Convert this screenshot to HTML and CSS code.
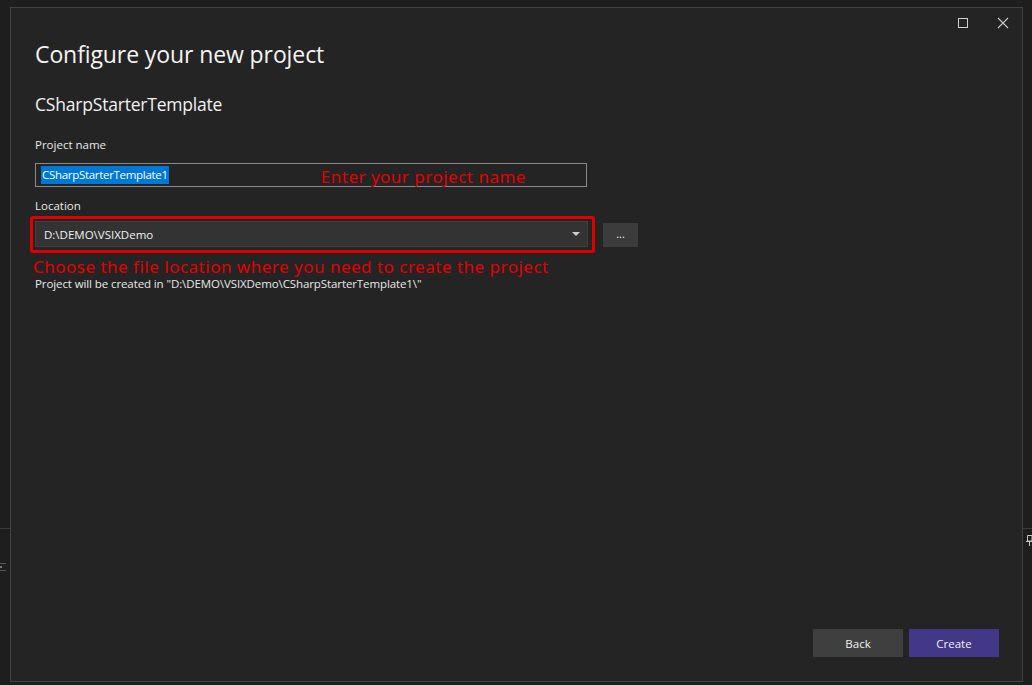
FILE: index.html
```html
<!DOCTYPE html>
<html>
<head>
<meta charset="utf-8">
<link rel="stylesheet" href="styles.css">
</head>
<body>
<div class="screen">
  <div class="side side-left">
    <div class="side-line"></div>
    <div class="side-marks"><span></span><span class="short"></span><span></span></div>
  </div>
  <div class="dialog">
    <div class="titlebar">
      <svg class="ctl" width="12" height="12" viewBox="0 0 12 12"><rect x="1.5" y="1.5" width="9" height="9" fill="none" stroke="#d0d0d0" stroke-width="1"/></svg>
      <svg class="ctl" width="12" height="12" viewBox="0 0 12 12"><path d="M1 1 L11 11 M11 1 L1 11" stroke="#c8c8c8" stroke-width="1.1"/></svg>
    </div>
    <div class="content">
      <h1 class="title">Configure your new project</h1>
      <h2 class="subtitle">CSharpStarterTemplate</h2>
      <div class="label">Project name</div>
      <div class="input">
        <span class="selected">CSharpStarterTemplate1</span>
        <span class="note note-name">Enter your project name</span>
      </div>
      <div class="label label-loc">Location</div>
      <div class="loc-row">
        <div class="highlight">
          <div class="combo">
            <span>D:\DEMO\VSIXDemo</span>
            <svg width="8" height="5" viewBox="0 0 8 5"><path d="M0 0 L8 0 L4 4 Z" fill="#d0d0d0"/></svg>
          </div>
        </div>
        <div class="browse">...</div>
      </div>
      <div class="note note-loc">Choose the file location where you need to create the project</div>
      <div class="info">Project will be created in "D:\DEMO\VSIXDemo\CSharpStarterTemplate1\"</div>
    </div>
    <div class="footer">
      <button class="btn btn-back">Back</button>
      <button class="btn btn-create">Create</button>
    </div>
  </div>
  <div class="side side-right">
    <div class="side-line"></div>
    <svg class="pin" width="6" height="12" viewBox="0 0 6 12"><path d="M1.5 1.5 H6 V7 H1.5 Z" fill="none" stroke="#c8c8c8" stroke-width="1"/><path d="M0 7.5 H6 M3.5 8 V12" stroke="#c8c8c8" stroke-width="1"/></svg>
  </div>
</div>
</body>
</html>
```
FILE: styles.css
```css
* { box-sizing: border-box; }
html, body { margin: 0; padding: 0; }
body {
  background: #1e1e1e;
  font-family: "Open Sans", "Noto Sans", sans-serif;
  color: #f1f1f1;
  width: 1032px;
  height: 685px;
  overflow: hidden;
}
.screen {
  display: flex;
  width: 1032px;
  height: 685px;
}
.side {
  position: relative;
  flex: none;
}
.side-left { width: 10px; }
.side-right { width: 9px; }
.side-line {
  position: absolute;
  left: 0; right: 0;
  top: 528px;
  height: 1px;
  background: #3c3c3c;
}
.side-marks {
  position: absolute;
  top: 563px;
  left: 0;
  display: flex;
  flex-direction: column;
  gap: 2px;
}
.side-marks span { display: block; width: 6px; height: 1px; background: #555; }
.side-marks span.short { width: 2px; height: 2px; background: #777; }
.pin { position: absolute; left: 3px; top: 534px; }
.dialog {
  margin-top: 7px;
  width: 1013px;
  height: 675px;
  background: #242424;
  border: 1px solid #434346;
  display: flex;
  flex-direction: column;
}
.titlebar {
  display: flex;
  justify-content: flex-end;
  gap: 28px;
  padding: 9px 13px 0 0;
  height: 24px;
}
.content {
  padding-left: 24px;
  flex: 1;
}
.title {
  margin: 7px 0 0;
  font-size: 23px;
  font-weight: 400;
  line-height: 30px;
  color: #f4f4f4;
  letter-spacing: -0.1px;
}
.subtitle {
  margin: 23px 0 0;
  font-size: 17.5px;
  font-weight: 400;
  line-height: 24px;
  color: #f1f1f1;
  letter-spacing: -0.2px;
}
.label {
  margin-top: 21px;
  font-size: 11.5px;
  line-height: 16px;
  color: #e8e8e8;
}
.input {
  margin-top: 10px;
  width: 552px;
  height: 24px;
  border: 1px solid #8b8b8b;
  display: flex;
  align-items: center;
  padding-left: 5px;
}
.selected {
  background: #0078d7;
  color: #ffffff;
  font-size: 11.5px;
  line-height: 18px;
  padding: 0 1px;
  letter-spacing: -0.3px;
}
.note {
  color: #e30000;
  font-family: "Noto Sans", "Open Sans", sans-serif;
  font-size: 17px;
  letter-spacing: 0.5px;
}
.note-name {
  margin-left: 152px;
  margin-top: 4px;
  line-height: 18px;
}
.label-loc { margin-top: 11px; }
.loc-row {
  margin-top: 2px;
  margin-left: -5px;
  display: flex;
  align-items: center;
  gap: 8px;
}
.highlight {
  width: 565px;
  height: 37px;
  border: 3px solid #e00000;
  border-radius: 3px;
  padding: 2px 4px 3px 2px;
}
.combo {
  height: 100%;
  background: #333333;
  border: 1px solid #3f3f3f;
  display: flex;
  align-items: center;
  justify-content: space-between;
  padding: 0 7px 0 8px;
  font-size: 11.5px;
  color: #f1f1f1;
}
.browse {
  width: 35px;
  height: 24px;
  background: #3c3c3c;
  font-size: 11px;
  display: flex;
  align-items: center;
  justify-content: center;
  line-height: 1;
  padding-bottom: 2px;
}
.note-loc {
  margin-top: 6px;
  margin-left: -2px;
  line-height: 16px;
}
.info {
  margin-top: 2px;
  font-size: 11.5px;
  line-height: 13px;
  color: #e8e8e8;
  letter-spacing: -0.1px;
}
.footer {
  display: flex;
  justify-content: flex-end;
  gap: 6px;
  padding: 0 23px 24px 0;
}
.btn {
  width: 90px;
  height: 28px;
  border: none;
  font-family: "Open Sans", "Noto Sans", sans-serif;
  font-size: 11.5px;
  color: #f1f1f1;
  padding: 0;
}
.btn-back { background: #3f3f3f; }
.btn-create { background: #433788; }
```
